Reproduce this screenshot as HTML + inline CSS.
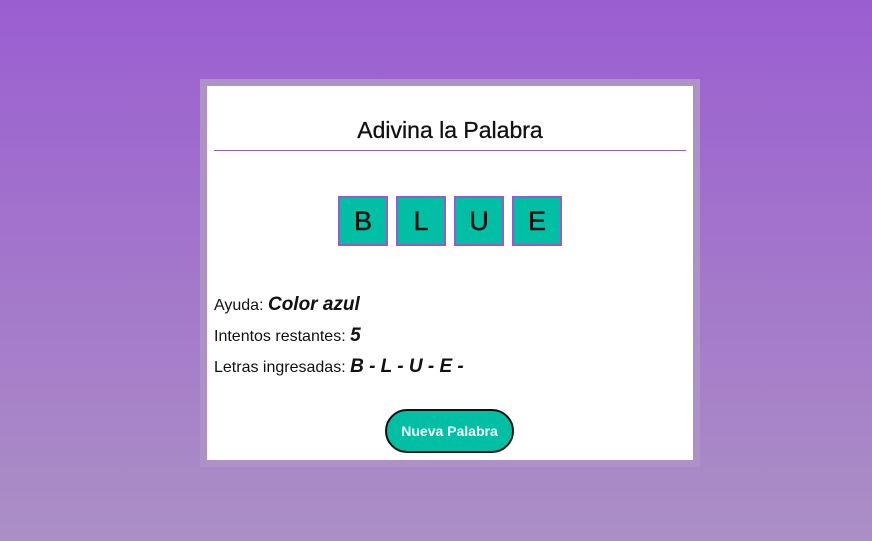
<!DOCTYPE html>
<html><head><style>
body{margin:0;width:872px;height:541px;background:linear-gradient(#9b5ed1,#ab8fc5);font-family:"Liberation Sans",sans-serif;position:relative;overflow:hidden}
.card{position:absolute;left:200px;top:79px;width:486px;height:374px;border:7px solid #ae91c7;background:#fff}
h1{position:absolute;left:0;width:486px;top:31px;margin:0;text-align:center;font-weight:normal;font-size:23px;color:#111;-webkit-text-stroke:0.3px #111}
.hr{position:absolute;left:7px;width:472px;top:64px;height:1px;background:#8b63c2}
.boxes{position:absolute;top:110px;left:131px}
.b{position:absolute;width:46px;height:46px;border:2px solid #9b59d0;background:#00bfa5;text-align:center;line-height:46px;font-size:27px;color:#111;-webkit-text-stroke:0.5px #111}
.t{position:absolute;left:7px;font-size:16px;color:#111}
.t i{font-weight:bold;font-size:19px}
.btn{position:absolute;left:178px;top:323px;width:125px;height:40px;border:2px solid #111;border-radius:22px;background:#00bfa5;color:#fff;font-weight:bold;font-size:14px;text-align:center;line-height:40px}
</style></head><body>
<div class="card">
<h1>Adivina la Palabra</h1>
<div class="hr"></div>
<div class="boxes">
<div class="b" style="left:0">B</div><div class="b" style="left:58px">L</div><div class="b" style="left:116px">U</div><div class="b" style="left:174px">E</div>
</div>
<div class="t" style="top:208px">Ayuda: <i>Color azul</i></div>
<div class="t" style="top:239px">Intentos restantes: <i>5</i></div>
<div class="t" style="top:270px">Letras ingresadas: <i>B - L - U - E -</i></div>
<div class="btn">Nueva Palabra</div>
</div>
</body></html>
